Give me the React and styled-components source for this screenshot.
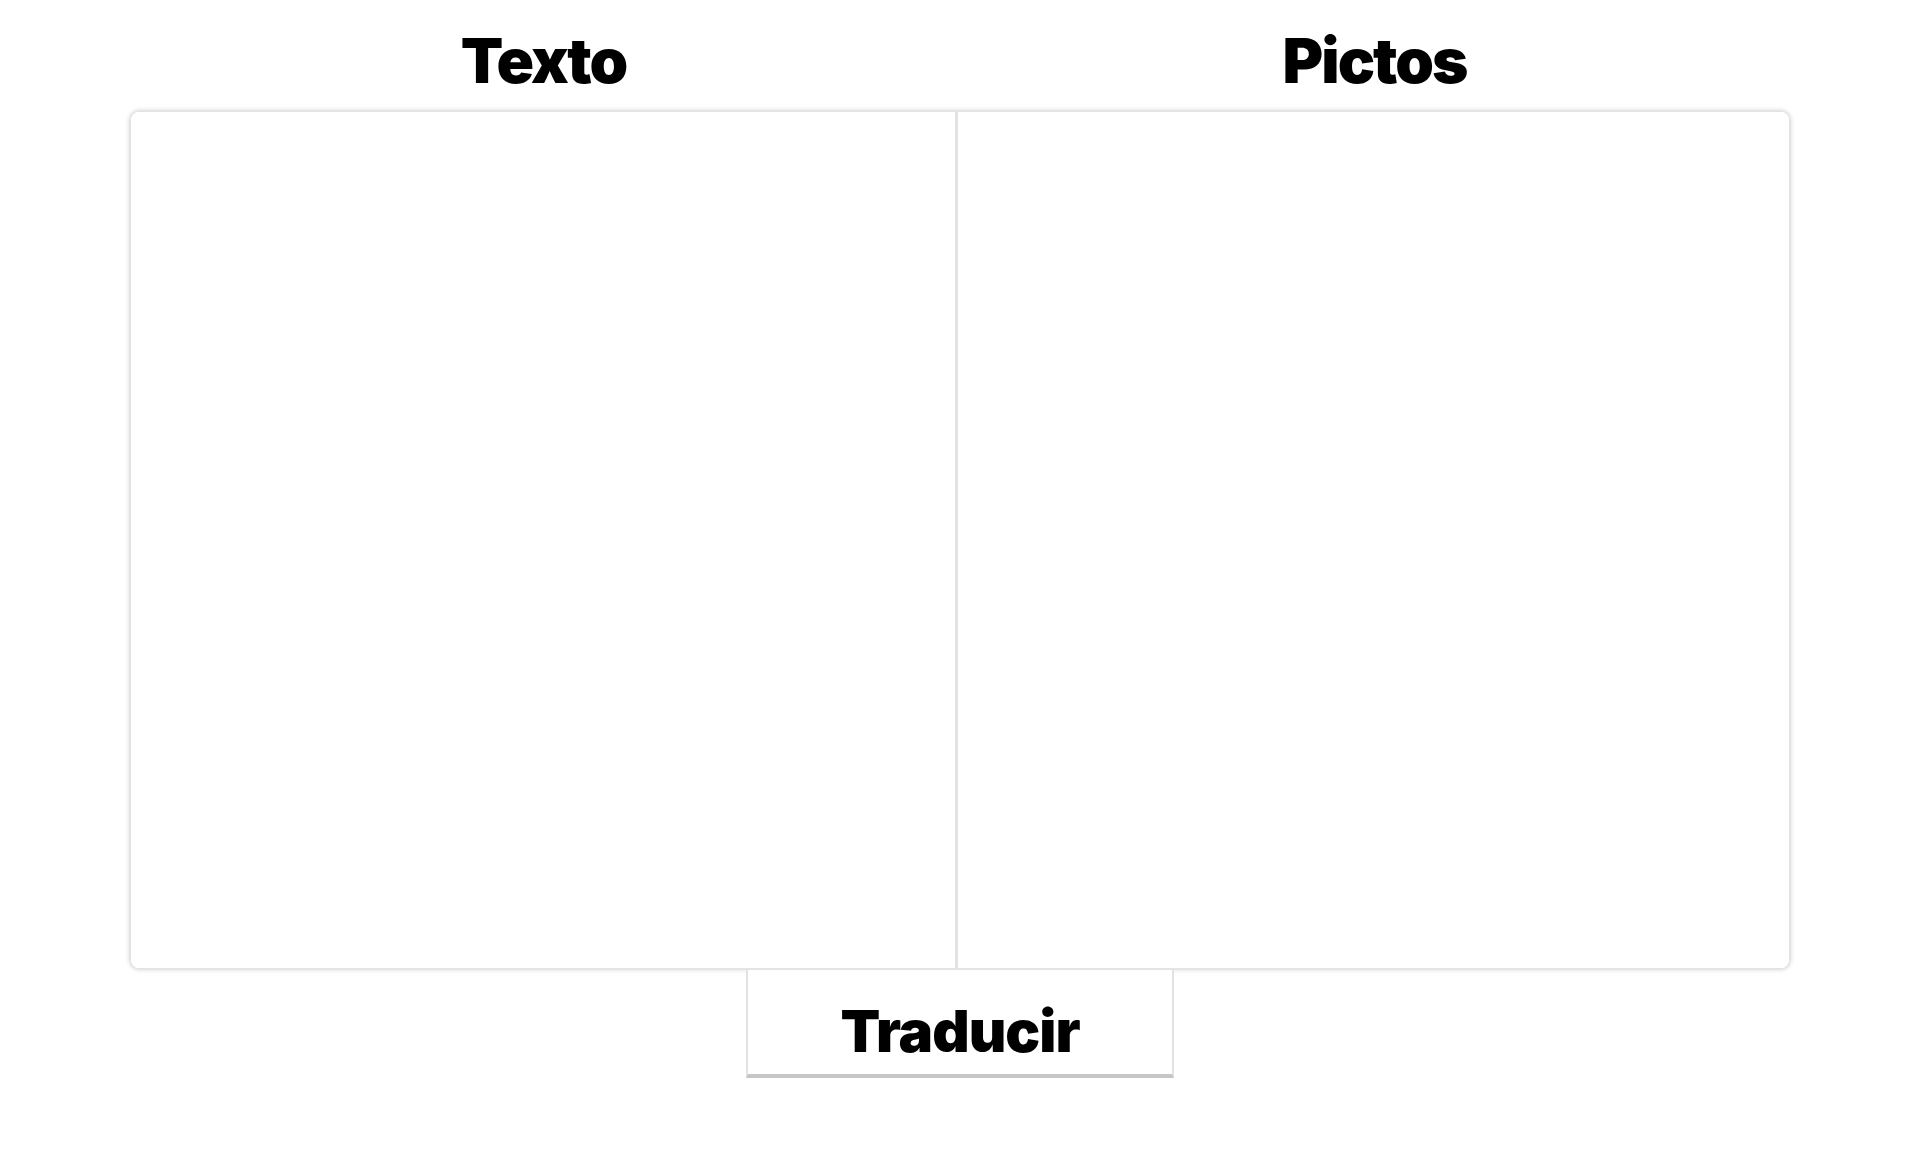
import React from "react";
import styled, { createGlobalStyle } from "styled-components";

const Global = createGlobalStyle`
  html, body { margin: 0; padding: 0; background: #ffffff; }
  body { font-family: "Inter", "Lato", sans-serif; color: #000; }
`;

const Page = styled.div`
  width: 1662px;
  margin: 0 auto;
  display: flex;
  flex-direction: column;
  align-items: center;
`;

const Headings = styled.div`
  width: 100%;
  display: grid;
  grid-template-columns: 829px 1fr;
  padding-top: 30px;
  height: 110px;
  box-sizing: border-box;
`;

const Heading = styled.h2`
  margin: 0;
  text-align: center;
  font-family: "Inter", "Lato", sans-serif;
  font-weight: 900;
  font-size: 62px;
  line-height: 62px;
  letter-spacing: -2px;
`;

const Board = styled.div`
  width: 100%;
  height: 860px;
  box-sizing: border-box;
  display: grid;
  grid-template-columns: 827px 1fr;
  border: 2px solid #e4e4e4;
  border-radius: 10px;
  box-shadow: 0 0 4px rgba(0, 0, 0, 0.14);
  overflow: hidden;
`;

const Panel = styled.div`
  background: #fff;
  border-right: ${(p) => (p.$divider ? "3px solid #e2e2e2" : "none")};
  box-shadow: ${(p) => (p.$divider ? "1px 0 2px rgba(0,0,0,0.06)" : "none")};
`;

const Button = styled.button`
  width: 428px;
  height: 108px;
  box-sizing: border-box;
  background: #fff;
  border: 2px solid #e2e2e2;
  border-top: none;
  border-bottom: 4px solid #c6c6c6;
  font-family: "Inter", "Lato", sans-serif;
  font-weight: 900;
  font-size: 58px;
  letter-spacing: -1px;
  color: #000;
  padding: 18px 0 0;
  cursor: pointer;
`;

export default function App() {
  return (
    <>
      <Global />
      <Page>
        <Headings>
          <Heading>Texto</Heading>
          <Heading>Pictos</Heading>
        </Headings>
        <Board>
          <Panel $divider />
          <Panel />
        </Board>
        <Button>Traducir</Button>
      </Page>
    </>
  );
}
